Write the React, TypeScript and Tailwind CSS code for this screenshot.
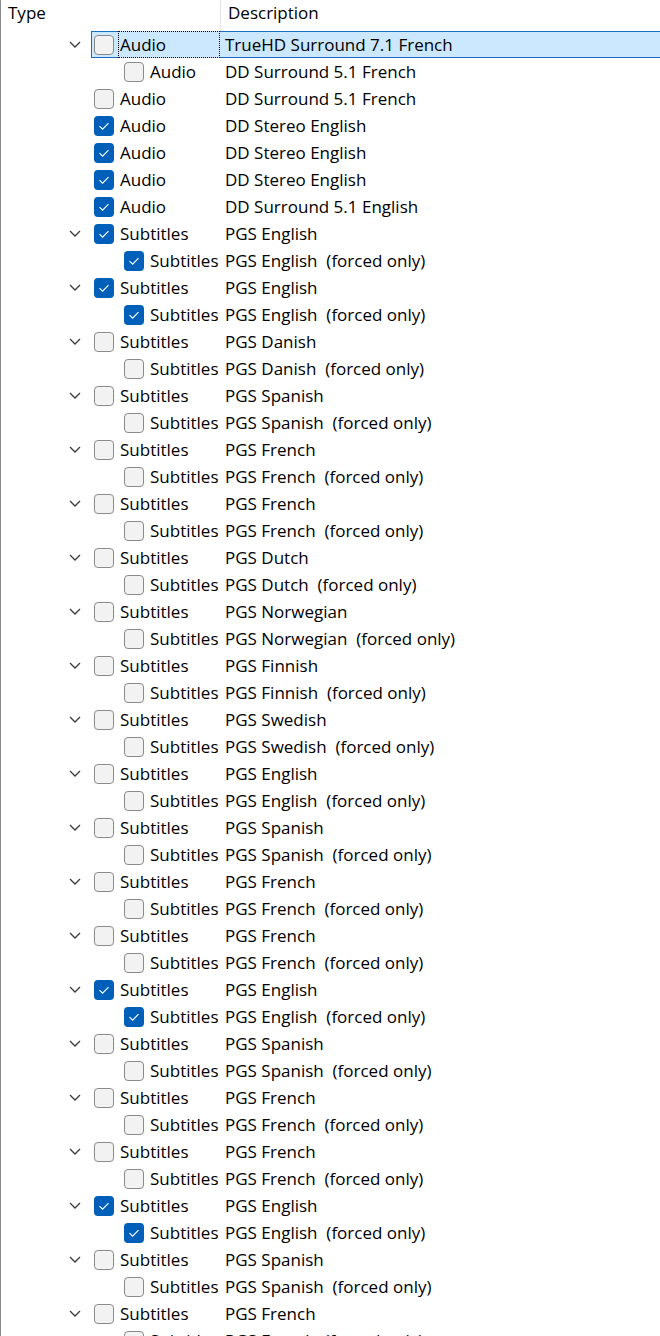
import React from "react";

type Row = { level: 0 | 1; chev: boolean; checked: boolean; type: string; desc: string; selected?: boolean };

const rows: Row[] = [];
rows.push({ level: 0, chev: true, checked: false, type: "Audio", desc: "TrueHD Surround 7.1 French", selected: true });
rows.push({ level: 1, chev: false, checked: false, type: "Audio", desc: "DD Surround 5.1 French" });
rows.push({ level: 0, chev: false, checked: false, type: "Audio", desc: "DD Surround 5.1 French" });
rows.push({ level: 0, chev: false, checked: true, type: "Audio", desc: "DD Stereo English" });
rows.push({ level: 0, chev: false, checked: true, type: "Audio", desc: "DD Stereo English" });
rows.push({ level: 0, chev: false, checked: true, type: "Audio", desc: "DD Stereo English" });
rows.push({ level: 0, chev: false, checked: true, type: "Audio", desc: "DD Surround 5.1 English" });

const subs: [string, boolean][] = [
  ["English", true],
  ["English", true],
  ["Danish", false],
  ["Spanish", false],
  ["French", false],
  ["French", false],
  ["Dutch", false],
  ["Norwegian", false],
  ["Finnish", false],
  ["Swedish", false],
  ["English", false],
  ["Spanish", false],
  ["French", false],
  ["French", false],
  ["English", true],
  ["Spanish", false],
  ["French", false],
  ["French", false],
  ["English", true],
  ["Spanish", false],
  ["French", false],
];
for (const [lang, c] of subs) {
  rows.push({ level: 0, chev: true, checked: c, type: "Subtitles", desc: "PGS " + lang });
  rows.push({ level: 1, chev: false, checked: c, type: "Subtitles", desc: "PGS " + lang + "  (forced only)" });
}

function Chevron() {
  return (
    <svg width="12" height="7" viewBox="0 0 12 7">
      <path d="M1 1 L6 6 L11 1" fill="none" stroke="#3a3a3a" strokeWidth="1.3" />
    </svg>
  );
}

function Check({ checked }: { checked: boolean }) {
  if (checked) {
    return (
      <div className="w-[20px] h-[20px] rounded-[4px] bg-[#005fb8] flex items-center justify-center shrink-0">
        <svg width="20" height="20" viewBox="0 0 20 20">
          <path d="M5.5 10.2 L8.6 13.2 L14.5 7.2" fill="none" stroke="#ffffff" strokeWidth="1.1" />
        </svg>
      </div>
    );
  }
  return <div className="w-[20px] h-[20px] rounded-[4px] border border-[#8a8a8a] bg-[#f2f2f2] shrink-0" />;
}

function TreeRow({ r }: { r: Row }) {
  const sel = !!r.selected;
  let segCls = "";
  if (r.level === 0) {
    segCls = sel
      ? "w-[27px] shrink-0 flex items-center pl-[2px] border-l border-y border-[#1a6fc4]"
      : "w-[27px] shrink-0 flex items-center pl-[3px]";
  } else {
    segCls = "w-[57px] shrink-0 flex items-center pl-[33px]";
  }
  const typeCls =
    r.level === 0
      ? sel
        ? "w-[102px] shrink-0 flex items-center pl-[1px] border border-dotted border-[#000] overflow-hidden whitespace-nowrap"
        : "w-[102px] shrink-0 flex items-center pl-[2px] overflow-hidden whitespace-nowrap"
      : "w-[72px] shrink-0 flex items-center pl-[2px] overflow-hidden whitespace-nowrap";
  const descCls = sel
    ? "flex-1 min-w-0 flex items-center pl-[5px] border-y border-[#1a6fc4] whitespace-pre"
    : "flex-1 min-w-0 flex items-center pl-[5px] whitespace-pre";
  return (
    <div className="flex h-[27px] shrink-0">
      <div className="w-[90px] shrink-0 flex items-center">
        {r.chev && (
          <div className="ml-[64px] w-[20px] flex justify-center items-center">
            <Chevron />
          </div>
        )}
      </div>
      <div className={sel ? "flex flex-1 min-w-0 bg-[#cce8ff]" : "flex flex-1 min-w-0"}>
        <div className={segCls}>
          <Check checked={r.checked} />
        </div>
        <div className={typeCls}>
          <span className="leading-[27px]">{r.type}</span>
        </div>
        <div className={descCls}>
          <span className="leading-[27px]">{r.desc}</span>
        </div>
      </div>
    </div>
  );
}

export default function App() {
  return (
    <div
      className="w-[660px] h-[1336px] overflow-hidden bg-white border-l border-[#8c8c8c] flex flex-col text-[17px] text-black"
      style={{ fontFamily: '"Segoe UI", "Open Sans", "Noto Sans", sans-serif' }}
    >
      <div className="flex h-[31px] shrink-0">
        <div className="w-[219px] shrink-0 pl-[7px] leading-[26px]">Type</div>
        <div className="w-[1px] h-[31px] bg-[#e5e5e5] shrink-0" />
        <div className="flex-1 pl-[7px] leading-[26px]">Description</div>
      </div>
      {rows.map((r, i) => (
        <TreeRow key={i} r={r} />
      ))}
    </div>
  );
}
